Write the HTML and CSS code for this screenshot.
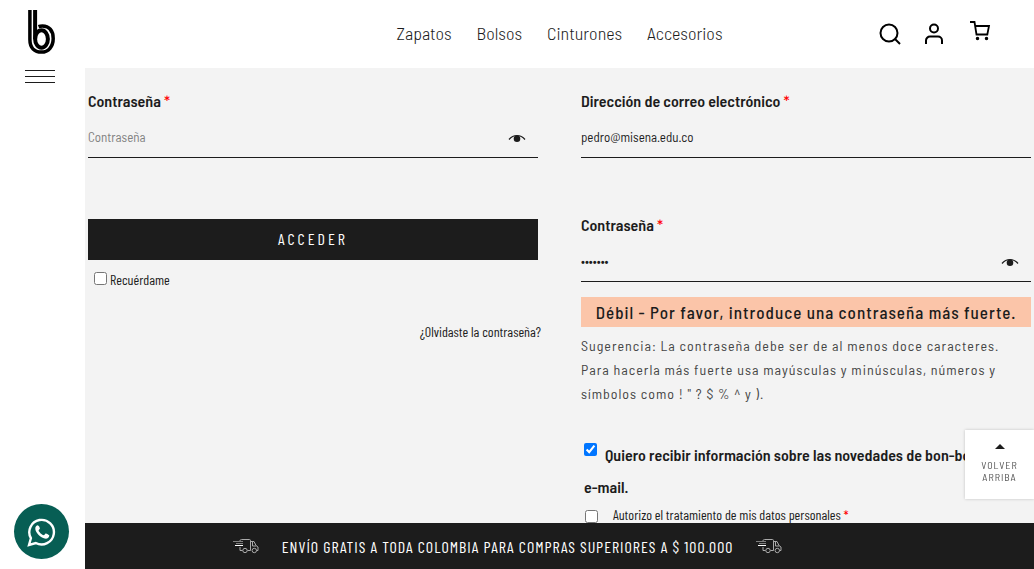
FILE: index.html
```html
<!DOCTYPE html>
<html lang="es">
<head>
<meta charset="utf-8">
<meta name="viewport" content="width=device-width, initial-scale=1">
<title>Mi cuenta</title>
<link rel="stylesheet" href="styles.css">
</head>
<body>
<svg class="defs" aria-hidden="true">
  <symbol id="eye" viewBox="0 0 18 10">
    <path d="M1 6.500C3.500 3.500 6 2.500 9 2.500S14.500 3.500 17 6.500" fill="none" stroke="currentColor" stroke-width="1.200"/>
    <circle cx="9" cy="5.800" r="3.300" fill="currentColor"/>
  </symbol>
  <symbol id="truck" viewBox="0 0 26 16">
    <g fill="none" stroke="currentColor" stroke-width="1">
      <path d="M7 3C7 2 7.500 1.500 8.500 1.500h8c.7 0 1 .5 1 1v10h-3M7 9v3.500h2.500M17.500 3.500h3.500l2 4 2 1.500v3.500h-1.500M19.500 4v4h3.500"/>
      <circle cx="12" cy="12.500" r="2.200"/><circle cx="21.300" cy="12.500" r="2.200"/>
    </g>
    <path d="M0 3.500h10M3 5.500h7" fill="none" stroke="currentColor" stroke-width=".7"/>
    <path d="M2 7.500h8" fill="none" stroke="#fff"/>
  </symbol>
</svg>
<div class="shell">
  <aside class="sidebar">
    <a class="logo" href="#" aria-label="Inicio">
      <svg viewBox="0 0 28 44" width="28" height="44" fill="none" stroke="#000" aria-hidden="true">
        <path d="M1.900 0V29.500C1.900 38 6.500 42.100 13.500 42.100S25.200 36.500 25.200 28.500 21 16 14.500 16c-1.500 0-2.700.1-4 .6" stroke-width="3.500"/>
        <path d="M7.100 0V29" stroke-width="4"/>
        <ellipse cx="13.500" cy="29" rx="6.400" ry="8.700" stroke-width="4"/>
      </svg>
    </a>
    <button class="burger" type="button" aria-label="Menú"><span></span><span></span><span></span></button>
    <a class="whatsapp" href="#" aria-label="WhatsApp">
      <svg viewBox="0 0 30 30" width="30" height="30" aria-hidden="true">
        <path d="M2 28l1.900-6.800A12.300 12.300 0 1 1 8.800 26z" fill="none" stroke="#fff" stroke-width="2.400" stroke-linejoin="miter"/>
        <path d="M10.500 8.300c-.6 0-2.500 1.200-2.200 3.700.4 3.800 5.400 8.800 9.400 9.600 2.700.5 4.500-1.300 4.600-3.100 0-.5-3-2.200-3.600-2.100-.6.200-1.300 1.800-1.900 1.800-1.600-.2-5-3.300-5.200-4.800 0-.6 1.200-1.200 1.300-1.900 0-.7-1-3.200-2.400-3.200z" fill="#fff"/>
      </svg>
    </a>
  </aside>

  <div class="page">
    <header class="header">
      <nav class="nav">
        <a href="#">Zapatos</a><a href="#">Bolsos</a><a href="#">Cinturones</a><a href="#">Accesorios</a>
      </nav>
      <div class="tools">
        <a href="#" aria-label="Buscar"><svg viewBox="0 0 22 22" width="22" height="22" fill="none" stroke="#000" stroke-width="2"><circle cx="10" cy="10" r="8.500"/><path d="M16 16l5 5"/></svg></a>
        <a href="#" aria-label="Mi cuenta"><svg viewBox="0 0 22 22" width="22" height="22" fill="none" stroke="#000" stroke-width="2"><circle cx="11" cy="5.500" r="4"/><path d="M3 21v-3.500a4 4 0 0 1 4-4h8a4 4 0 0 1 4 4V21"/></svg></a>
        <a class="cart" href="#" aria-label="Carrito"><svg viewBox="0 0 22 22" width="22" height="22" fill="none" stroke="#000" stroke-width="1.800"><path d="M1 2h4.500l2 12.500h10.800l1.700-8.500H6"/><circle cx="8.500" cy="18.500" r="1" fill="#000" stroke-width="1.500"/><circle cx="17.500" cy="18.500" r="1" fill="#000" stroke-width="1.500"/></svg></a>
      </div>
    </header>

    <main class="forms">
      <form class="login">
        <div class="field">
          <label for="login-pass">Contraseña <span class="req">*</span></label>
          <div class="control">
            <input id="login-pass" type="password" placeholder="Contraseña">
            <button class="reveal" type="button" aria-label="Mostrar contraseña"><svg width="18" height="10"><use href="#eye"/></svg></button>
          </div>
        </div>
        <button class="submit" type="button">ACCEDER</button>
        <div class="remember"><input id="remember" type="checkbox"><label for="remember">Recuérdame</label></div>
        <a class="forgot" href="#">¿Olvidaste la contraseña?</a>
      </form>

      <form class="register">
        <div class="field">
          <label for="email">Dirección de correo electrónico <span class="req">*</span></label>
          <div class="control"><input id="email" type="email" value="pedro@misena.edu.co"></div>
        </div>
        <div class="field">
          <label for="new-pass">Contraseña <span class="req">*</span></label>
          <div class="control">
            <input id="new-pass" type="password" value="pedro12">
            <button class="reveal" type="button" aria-label="Mostrar contraseña"><svg width="18" height="10"><use href="#eye"/></svg></button>
          </div>
        </div>
        <div class="strength">Débil - Por favor, introduce una contraseña más fuerte.</div>
        <p class="hint">Sugerencia: La contraseña debe ser de al menos doce caracteres. Para hacerla más fuerte usa mayúsculas y minúsculas, números y símbolos como ! " ? $ % ^ y ).</p>
        <div class="news"><input id="news" type="checkbox" checked><label for="news">Quiero recibir información sobre las novedades de bon-bonite por e-mail.</label></div>
        <div class="consent"><input id="consent" type="checkbox"><label for="consent">Autorizo el tratamiento de mis datos personales <span class="req">*</span></label></div>
      </form>
    </main>

    <footer class="promo">
      <svg width="26" height="16" aria-hidden="true"><use href="#truck"/></svg>
      <span>ENVÍO GRATIS A TODA COLOMBIA PARA COMPRAS SUPERIORES A $ 100.000</span>
      <svg width="26" height="16" aria-hidden="true"><use href="#truck"/></svg>
    </footer>
  </div>
</div>
<a class="to-top" href="#"><span class="arrow"></span>VOLVER<br>ARRIBA</a>
</body>
</html>
```
FILE: styles.css
```css
* { box-sizing: border-box; }
body {
  margin: 0;
  background: #fff;
  color: #1c1c1c;
  font-family: "Barlow Semi Condensed", "Liberation Sans Narrow", Roboto, sans-serif;
  font-size: 14px;
}
a { color: inherit; text-decoration: none; }
button, input { font: inherit; color: inherit; }
button { border: 0; padding: 0; background: none; cursor: pointer; }
svg { display: block; }
.defs { position: absolute; width: 0; height: 0; }

.shell { display: grid; grid-template-columns: 85px 1fr; height: 100vh; overflow: hidden; }

.sidebar { display: flex; flex-direction: column; align-items: center; padding: 10px 2px 10px 0; }
.burger { display: flex; flex-direction: column; gap: 5px; margin: 16px 3px 0 0; }
.burger span { width: 30px; height: 1px; background: #1c1c1c; }
.whatsapp {
  display: grid; place-items: center;
  width: 55px; height: 55px; margin-top: auto;
  border-radius: 50%; background: #075e54;
}

.page { display: flex; flex-direction: column; min-width: 0; min-height: 0; }
.header {
  display: grid; grid-template-columns: 1fr auto 1fr; align-items: center;
  flex: none; height: 68px;
}
.nav { grid-column: 2; display: flex; gap: 25px; padding-bottom: 2px; font-size: 18px; font-weight: 300; }
.tools { display: flex; justify-content: flex-end; gap: 22px; padding-right: 43px; }
.cart { margin: -3px 0 0 2px; }

.forms {
  flex: 1; min-height: 0; overflow: hidden;
  display: grid; grid-template-columns: 1fr 1fr; gap: 43px;
  padding: 22px 3px 0; background: #f3f3f3;
}
.login, .register { display: flex; flex-direction: column; min-width: 0; }
.field > label { display: block; font-size: 16px; line-height: 22px; font-weight: 600; }
.req { color: #f00; font-weight: 500; }
.control { display: flex; align-items: center; margin-top: 6px; height: 40px; border-bottom: 1px solid #1c1c1c; }
.control input { flex: 1; min-width: 0; padding: 0 0 2px; border: 0; outline: 0; background: none; font-size: 13px; }
.control input::placeholder { color: #808080; }
.reveal { margin-right: 12px; }
.submit, .remember, .forgot, .consent, .promo {
  font-family: "Barlow Condensed", "Liberation Sans Narrow", Roboto, sans-serif;
}
.submit, .promo { font-size: 16px; }
.remember, .forgot, .consent { font-size: 14px; }
.submit {
  height: 41px; margin-top: 61px; padding-bottom: 2px;
  background: #1c1c1c; color: #fff; letter-spacing: 3px;
}
.remember { display: flex; gap: 3px; margin-top: 10px; padding-left: 6px; line-height: 20px; }
.remember input { margin: 2px 0 0; width: 13px; height: 13px; }
.forgot { align-self: flex-end; margin: 32px -3px 0 0; line-height: 20px; }

.register .field + .field { margin-top: 56px; }
.strength {
  margin-top: 15px; background: #fbc5a9; text-align: center;
  font-size: 17px; line-height: 30px; font-weight: 500; letter-spacing: 1px; white-space: nowrap;
}
.hint { margin: 7px 0 0; padding-right: 16px; color: #444; line-height: 24px; letter-spacing: 1px; }
.news { margin-top: 33px; padding-left: 3px; font-size: 16px; line-height: 32px; font-weight: 600; }
.news input { width: 13px; height: 13px; margin: 0 8px 0 0; vertical-align: 5px; }
.consent { display: flex; gap: 15px; padding-left: 4px; line-height: 24px; }
.consent input { width: 13px; height: 13px; margin: 7px 0 0; }

.promo {
  display: flex; align-items: center; justify-content: center; gap: 23px;
  flex: none; height: 46px; padding-right: 104px;
  background: #1c1c1c; color: #fff; letter-spacing: 1px;
}
.promo svg { color: #aaa; }

.to-top {
  position: fixed; right: 0; bottom: 70px; width: 69px; height: 69px;
  display: flex; flex-direction: column; align-items: center;
  padding-top: 14px; background: #fff; box-shadow: 0 0 3px rgba(0, 0, 0, .2);
  color: #555; font-size: 10px; line-height: 12px; letter-spacing: 1px; text-align: center;
}
.arrow { margin-bottom: 10px; border: 5px solid transparent; border-top: 0; border-bottom-color: #1c1c1c; }
```
